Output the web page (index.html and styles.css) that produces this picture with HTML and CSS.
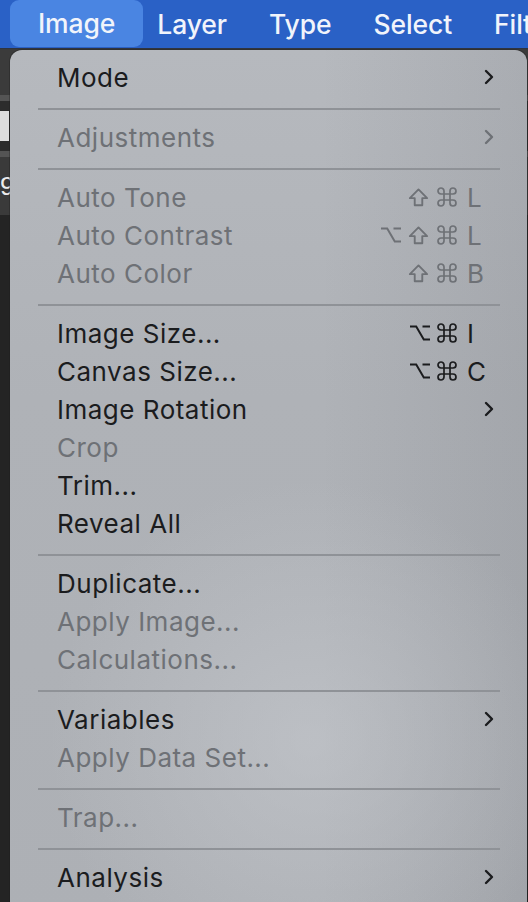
FILE: index.html
```html
<!DOCTYPE html>
<html>
<head>
<meta charset="utf-8">
<link rel="stylesheet" href="styles.css">
</head>
<body>
<div class="app">
  <header class="menubar">
    <span class="mb-item active">Image</span>
    <span class="mb-item">Layer</span>
    <span class="mb-item">Type</span>
    <span class="mb-item">Select</span>
    <span class="mb-item">Filter</span>
  </header>
  <div class="workspace">
    <div class="ws-top"></div>
    <div class="ws-line"></div>
    <div class="ws-field"><div class="ws-chip"></div></div>
    <div class="ws-line"></div>
    <div class="ws-num">9</div>
    <div class="ws-rest"></div>
  </div>
</div>

<div class="menu">
  <div class="row"><span class="label">Mode</span><span class="chev"><svg viewBox="0 0 10 16"><path d="M2 2 L8 8 L2 14"/></svg></span></div>
  <div class="sep"></div>
  <div class="row off"><span class="label">Adjustments</span><span class="chev"><svg viewBox="0 0 10 16"><path d="M2 2 L8 8 L2 14"/></svg></span></div>
  <div class="sep"></div>
  <div class="row off"><span class="label">Auto Tone</span><span class="keys">
    <span class="slot"><svg class="ic shift" viewBox="0 0 20 18"><path d="M10 1.3 L18.2 9.6 H13.6 V16.4 H6.4 V9.6 H1.8 Z"/></svg></span>
    <span class="slot"><svg class="ic cmd" viewBox="0 0 20 20"><path d="M7 7V4A3 3 0 1 0 4 7H16A3 3 0 1 0 13 4V16A3 3 0 1 0 16 13H4A3 3 0 1 0 7 16Z"/></svg></span>
    <span class="slot k">L</span></span></div>
  <div class="row off"><span class="label">Auto Contrast</span><span class="keys">
    <span class="slot"><svg class="ic opt" viewBox="0 0 22 18"><path d="M1 2.5 H7.2 L14.8 15.5 H21 M13.5 2.5 H21"/></svg></span>
    <span class="slot"><svg class="ic shift" viewBox="0 0 20 18"><path d="M10 1.3 L18.2 9.6 H13.6 V16.4 H6.4 V9.6 H1.8 Z"/></svg></span>
    <span class="slot"><svg class="ic cmd" viewBox="0 0 20 20"><path d="M7 7V4A3 3 0 1 0 4 7H16A3 3 0 1 0 13 4V16A3 3 0 1 0 16 13H4A3 3 0 1 0 7 16Z"/></svg></span>
    <span class="slot k">L</span></span></div>
  <div class="row off"><span class="label">Auto Color</span><span class="keys">
    <span class="slot"><svg class="ic shift" viewBox="0 0 20 18"><path d="M10 1.3 L18.2 9.6 H13.6 V16.4 H6.4 V9.6 H1.8 Z"/></svg></span>
    <span class="slot"><svg class="ic cmd" viewBox="0 0 20 20"><path d="M7 7V4A3 3 0 1 0 4 7H16A3 3 0 1 0 13 4V16A3 3 0 1 0 16 13H4A3 3 0 1 0 7 16Z"/></svg></span>
    <span class="slot k">B</span></span></div>
  <div class="sep"></div>
  <div class="row"><span class="label">Image Size...</span><span class="keys">
    <span class="slot"><svg class="ic opt" viewBox="0 0 22 18"><path d="M1 2.5 H7.2 L14.8 15.5 H21 M13.5 2.5 H21"/></svg></span>
    <span class="slot"><svg class="ic cmd" viewBox="0 0 20 20"><path d="M7 7V4A3 3 0 1 0 4 7H16A3 3 0 1 0 13 4V16A3 3 0 1 0 16 13H4A3 3 0 1 0 7 16Z"/></svg></span>
    <span class="slot k">I</span></span></div>
  <div class="row"><span class="label">Canvas Size...</span><span class="keys">
    <span class="slot"><svg class="ic opt" viewBox="0 0 22 18"><path d="M1 2.5 H7.2 L14.8 15.5 H21 M13.5 2.5 H21"/></svg></span>
    <span class="slot"><svg class="ic cmd" viewBox="0 0 20 20"><path d="M7 7V4A3 3 0 1 0 4 7H16A3 3 0 1 0 13 4V16A3 3 0 1 0 16 13H4A3 3 0 1 0 7 16Z"/></svg></span>
    <span class="slot k">C</span></span></div>
  <div class="row"><span class="label">Image Rotation</span><span class="chev"><svg viewBox="0 0 10 16"><path d="M2 2 L8 8 L2 14"/></svg></span></div>
  <div class="row off"><span class="label">Crop</span></div>
  <div class="row"><span class="label">Trim...</span></div>
  <div class="row"><span class="label">Reveal All</span></div>
  <div class="sep"></div>
  <div class="row"><span class="label">Duplicate...</span></div>
  <div class="row off"><span class="label">Apply Image...</span></div>
  <div class="row off"><span class="label">Calculations...</span></div>
  <div class="sep"></div>
  <div class="row"><span class="label">Variables</span><span class="chev"><svg viewBox="0 0 10 16"><path d="M2 2 L8 8 L2 14"/></svg></span></div>
  <div class="row off"><span class="label">Apply Data Set...</span></div>
  <div class="sep"></div>
  <div class="row off"><span class="label">Trap...</span></div>
  <div class="sep"></div>
  <div class="row"><span class="label">Analysis</span><span class="chev"><svg viewBox="0 0 10 16"><path d="M2 2 L8 8 L2 14"/></svg></span></div>
</div>
</body>
</html>
```

FILE: styles.css
```css
html, body {
  margin: 0;
  padding: 0;
  width: 528px;
  height: 902px;
  overflow: hidden;
  background: #262626;
  font-family: Inter, "Liberation Sans", "DejaVu Sans", sans-serif;
}

.app {
  display: flex;
  flex-direction: column;
  height: 902px;
}

.menubar {
  height: 48px;
  background: #2a61c6;
  display: flex;
  align-items: stretch;
  white-space: nowrap;
  overflow: hidden;
  border-bottom: 1px solid #2f3440;
  flex: none;
}

.mb-item {
  display: flex;
  align-items: center;
  padding: 0 21px 1px;
  color: #f1f4fb;
  font-size: 26.5px;
  font-weight: 500;
  letter-spacing: -0.1px;
}

.mb-item.active {
  background: #4a85e2;
  border-radius: 9px;
  margin: 0 -7px 1px 10px;
  padding: 0 28px 1px;
}

.workspace {
  flex: 1;
  display: flex;
  flex-direction: column;
  background: #262626;
}

.ws-top {
  height: 46px;
  background: #3b3b3b;
}

.ws-line {
  height: 6px;
  background: #545454;
}

.ws-field {
  height: 50px;
  background: #2c2c2c;
  display: flex;
  align-items: center;
}

.ws-chip {
  width: 9px;
  height: 30px;
  background: #dedede;
}

.ws-num {
  height: 58px;
  background: #3a3a3a;
  color: #ececec;
  font-size: 26px;
  line-height: 58px;
  font-family: "Liberation Sans", sans-serif;
}

.ws-rest {
  flex: 1;
  background: #242424;
}

.menu {
  position: absolute;
  left: 10px;
  top: 50px;
  width: 517px;
  height: 870px;
  box-sizing: border-box;
  padding-top: 8px;
  border-radius: 12px;
  background:
    radial-gradient(ellipse 260px 260px at 300px 690px, rgba(200, 203, 208, 0.55), rgba(200, 203, 208, 0) 100%),
    linear-gradient(90deg, rgba(255,255,255,0) 60%, rgba(60,64,72,0.10) 100%),
    linear-gradient(180deg, #b6b9be 0%, #afb2b7 40%, #adb0b5 100%);
  box-shadow: 0 0 0 1px rgba(30, 30, 30, 0.35);
}

.row {
  height: 38px;
  display: flex;
  align-items: center;
  justify-content: space-between;
  padding: 0 31px 0 47px;
  color: #1b1c1e;
  font-size: 26px;
  letter-spacing: 0.5px;
}

.row.off {
  color: #6e7176;
}

.label {
  white-space: nowrap;
}

.sep {
  height: 22px;
  box-sizing: border-box;
  padding-top: 12px;
  margin: 0 27px 0 28px;
}

.sep::before {
  content: "";
  display: block;
  height: 2px;
  background: #8f9297;
}

.chev {
  width: 10px;
  height: 16px;
  display: flex;
  margin-right: 2px;
}

.chev svg {
  width: 10px;
  height: 16px;
  fill: none;
  stroke: currentColor;
  stroke-width: 2.4;
  stroke-linecap: round;
  stroke-linejoin: round;
}

.keys {
  display: flex;
  align-items: center;
}

.slot {
  width: 29px;
  height: 38px;
  display: flex;
  align-items: center;
}

.slot.k {
  font-size: 26px;
  letter-spacing: 0;
}

.ic {
  fill: none;
  stroke: currentColor;
  stroke-width: 1.8;
  stroke-linejoin: round;
}

.ic.shift {
  width: 21px;
  height: 19px;
  margin-left: -1px;
}

.ic.cmd {
  width: 20px;
  height: 20px;
  margin-left: -1px;
  stroke-width: 1.7;
}

.ic.opt {
  width: 22px;
  height: 18px;
  stroke-width: 2;
  stroke-linejoin: miter;
}
```
